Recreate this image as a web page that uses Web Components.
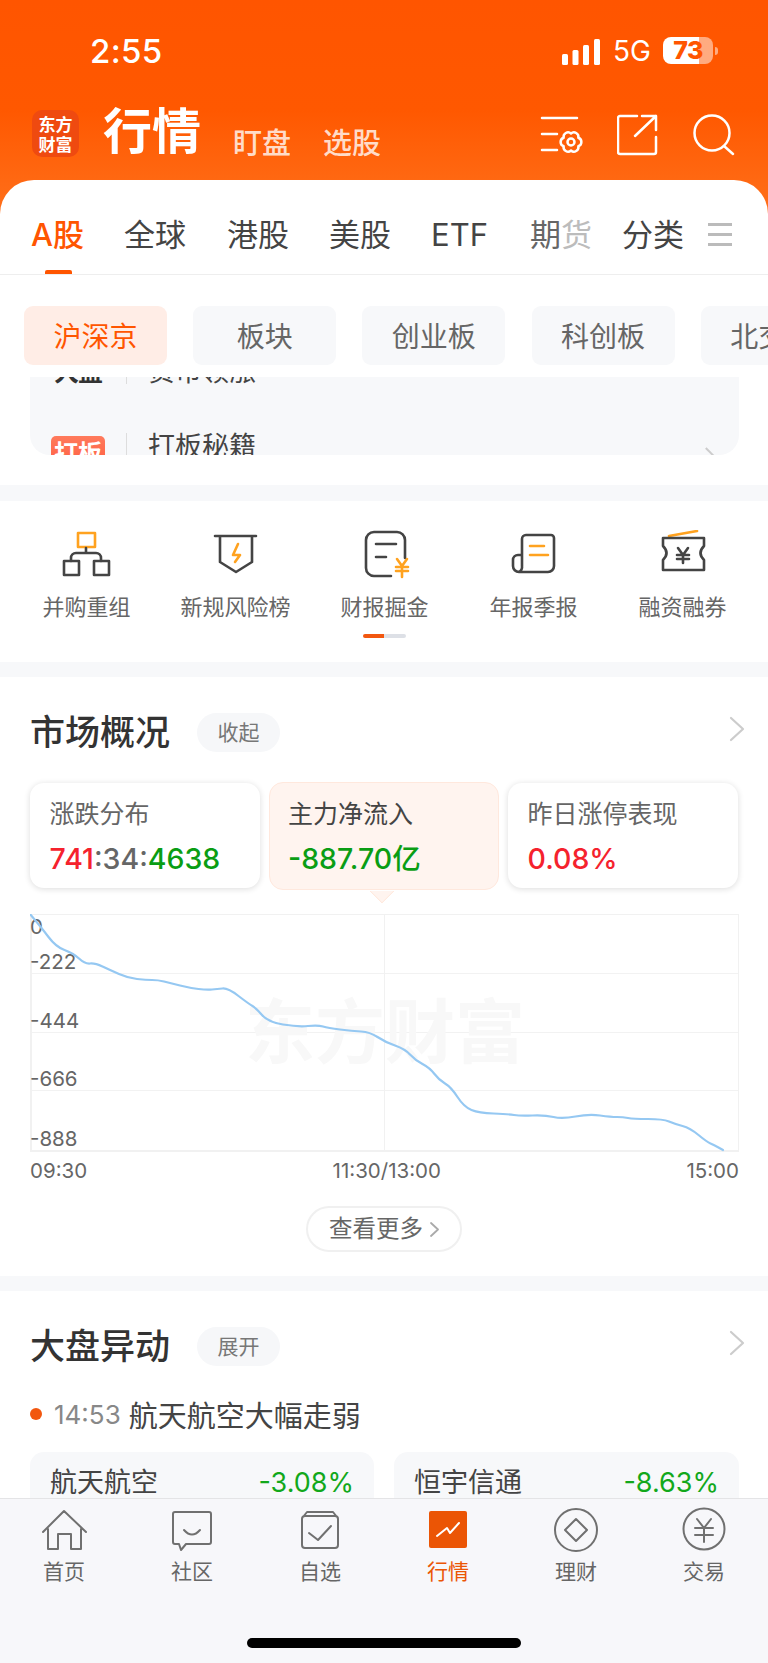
<!DOCTYPE html>
<html lang="zh">
<head>
<meta charset="utf-8">
<title>行情</title>
<style>
  html, body { margin: 0; padding: 0; background: #fff; }
  body {
    width: 768px; height: 1663px; overflow: hidden;
    display: flex; flex-direction: column;
    font-family: Inter, "Noto Sans CJK SC", sans-serif;
    color: #333;
  }
</style>
</head>
<body>

<top-header></top-header>

<page-body>
  <promo-panel></promo-panel>
  <tool-grid></tool-grid>
  <market-overview></market-overview>
  <market-alerts></market-alerts>
</page-body>

<tab-bar></tab-bar>

<script>
class TopHeader extends HTMLElement {

    constructor() {
        super()
        this.shadow = this.attachShadow({ mode: 'open' })
    }

    connectedCallback() {
        this.render()
    }

    render() {
        this.shadow.innerHTML =
      /*html*/`
      <style>
        :host{
            display:block;
            flex:none;
            background:linear-gradient(180deg,#ff5500 0,#ff5800 110px,#ff711c 220px);
        }
        .status{
            height:108px;
            padding:37px 50px 0 90px;
            box-sizing:border-box;
            display:flex;
            align-items:flex-start;
            color:#fff;
        }
        .time{
            font-size:33px;
            line-height:29px;
            font-weight:500;
            flex:1;
            letter-spacing:.3px;
        }
        .net{
            font-size:28px;
            line-height:28px;
            margin:0 12px 0 13px;
        }
        .battery{
            width:50px;
            height:27px;
            border-radius:8px;
            background:linear-gradient(90deg,#fff 36px,rgba(255,255,255,.5) 36px);
            color:#ff5500;
            font-size:25px;
            font-weight:800;
            line-height:27px;
            text-align:center;
            letter-spacing:-.5px;
        }
        .nub{
            width:3px;
            height:8px;
            margin:10px 0 0 2px;
            border-radius:0 3px 3px 0;
            background:rgba(255,255,255,.5);
        }
        .bar{
            height:72px;
            padding:0 32px;
            display:flex;
            align-items:flex-start;
            color:#fff;
        }
        .logo{
            width:47px;
            height:47px;
            margin-top:2px;
            border-radius:10px;
            background:#ef4a10;
            font-family:"Noto Sans CJK SC",sans-serif;
            font-size:17px;
            font-weight:700;
            line-height:20px;
            text-align:center;
            display:flex;
            flex-direction:column;
            justify-content:center;
        }
        .title{
            font-size:49px;
            line-height:48px;
            font-weight:700;
            margin:0 0 0 24px;
            width:130px;
        }
        .sub{
            font-size:29px;
            line-height:30px;
            margin-top:21px;
            font-weight:500;
            color:rgba(255,255,255,.8);
        }
        .sub + .sub{
            margin-left:32px;
        }
        .icons{
            margin-left:auto;
            margin-top:5px;
            display:flex;
        }
        svg{
            display:block;
        }
      </style>
      <div class="status">
        <div class="time">2:55</div>
        <svg width="38" height="26" viewBox="0 0 38 26" style="margin-top:2px" fill="#fff">
          <rect x="0" y="15" width="6" height="11" rx="1.5"/>
          <rect x="10.5" y="11" width="6" height="15" rx="1.5"/>
          <rect x="21" y="6" width="6" height="20" rx="1.5"/>
          <rect x="32" y="0" width="6" height="26" rx="1.5"/>
        </svg>
        <div class="net">5G</div>
        <div class="battery">73</div>
        <div class="nub"></div>
      </div>
      <div class="bar">
        <div class="logo"><span>东方</span><span>财富</span></div>
        <div class="title">行情</div>
        <div class="sub">盯盘</div>
        <div class="sub">选股</div>
        <div class="icons">
          <svg width="46" height="44" viewBox="0 0 46 44" fill="none" stroke="#fff" stroke-width="2.5" stroke-linecap="round" stroke-linejoin="round" style="margin-right:31px">
            <path d="M2 5H37M2 21H17M2 37H17"/>
            <path d="M31 20.5a4.5 4.5 0 0 1 7.36 4.25a4.5 4.5 0 0 1 0 8.5a4.5 4.5 0 0 1-7.36 4.25a4.5 4.5 0 0 1-7.36-4.25a4.5 4.5 0 0 1 0-8.5a4.5 4.5 0 0 1 7.36-4.25Z"/>
            <circle cx="31" cy="29" r="3.5"/>
          </svg>
          <svg width="41" height="44" viewBox="0 0 41 44" fill="none" stroke="#fff" stroke-width="2.5" stroke-linecap="round" stroke-linejoin="round" style="margin-right:34px">
            <path d="M20 3H3a2 2 0 0 0-2 2V39a2 2 0 0 0 2 2H37a2 2 0 0 0 2-2V24"/>
            <path d="M18 23L39 3M25 3H39V17"/>
          </svg>
          <svg width="44" height="44" viewBox="0 0 44 44" fill="none" stroke="#fff" stroke-width="2.5" stroke-linecap="round">
            <circle cx="20" cy="20" r="17.5"/>
            <path d="M32 33L41 41"/>
          </svg>
        </div>
      </div>
      <market-tabs></market-tabs>
      `
    }
}

class MarketTabs extends HTMLElement {

    constructor() {
        super()
        this.shadow = this.attachShadow({ mode: 'open' })
    }

    connectedCallback() {
        this.render()
    }

    render() {
        this.shadow.innerHTML =
      /*html*/`
      <style>
        :host{
            display:block;
            background:#fff;
            border-radius:34px 34px 0 0;
        }
        .tabs{
            height:94px;
            padding:0 35px 0 31px;
            display:flex;
            border-bottom:1px solid #eee;
            font-size:31px;
            color:#444;
        }
        .tab{
            padding-top:33px;
            line-height:44px;
            white-space:nowrap;
        }
        .on{
            color:#ff5500;
            font-weight:500;
            position:relative;
        }
        .on::after{
            content:"";
            position:absolute;
            left:14px;
            bottom:0;
            width:27px;
            height:4px;
            background:#ff5500;
            border-radius:2px 2px 0 0;
        }
        .fade{
            color:#666;
        }
        .fade span{
            color:#bcbcbc;
        }
        .menu{
            margin:43px 0 0 24px;
            width:24px;
            height:23px;
            border-top:3px solid #bbb;
            border-bottom:3px solid #bbb;
            box-sizing:border-box;
            position:relative;
        }
        .menu::after{
            content:"";
            position:absolute;
            left:0;
            right:0;
            top:7px;
            height:3px;
            background:#bbb;
        }
        .chips{
            padding:31px 0 12px 24px;
            display:flex;
            gap:26.2px;
            overflow:hidden;
        }
        .chip{
            flex:none;
            width:143px;
            height:59px;
            border-radius:9px;
            background:#f7f8fa;
            color:#666;
            font-size:28px;
            line-height:62px;
            text-align:center;
        }
        .chip.active{
            background:#ffede6;
            color:#ff5500;
        }
      </style>
      <div class="tabs">
        <div class="tab on" style="width:93px">A股</div>
        <div class="tab" style="width:103px">全球</div>
        <div class="tab" style="width:102px">港股</div>
        <div class="tab" style="width:102px">美股</div>
        <div class="tab" style="width:99px">ETF</div>
        <div class="tab fade" style="width:92px">期<span>货</span></div>
        <div class="tab">分类</div>
        <div class="menu"></div>
      </div>
      <div class="chips">
        <div class="chip active">沪深京</div>
        <div class="chip">板块</div>
        <div class="chip">创业板</div>
        <div class="chip">科创板</div>
        <div class="chip">北交所</div>
      </div>
      `
    }
}

class PageBody extends HTMLElement {

    constructor() {
        super()
        this.shadow = this.attachShadow({ mode: 'open' })
    }

    connectedCallback() {
        this.shadow.innerHTML =
      /*html*/`
      <style>
        :host{
            display:block;
            flex:1;
            min-height:0;
            overflow:hidden;
            background:#f7f8fa;
        }
      </style>
      <slot></slot>
      `
    }
}

class PromoPanel extends HTMLElement {

    constructor() {
        super()
        this.shadow = this.attachShadow({ mode: 'open' })
    }

    connectedCallback() {
        this.render()
    }

    render() {
        // la lista esta cortada arriba y abajo, como en el scroll real
        this.shadow.innerHTML =
      /*html*/`
      <style>
        :host{
            display:block;
            background:#fff;
            padding:0 29px 30px 30px;
        }
        .panel{
            height:78px;
            overflow:hidden;
            background:#f7f8fa;
            border-radius:0 0 20px 20px;
            position:relative;
        }
        .rows{
            margin-top:-25px;
        }
        .row{
            display:flex;
            align-items:center;
            height:40px;
            padding-left:21px;
            font-size:27px;
            line-height:40px;
            color:#444;
        }
        .icon{
            width:54px;
            font-size:25px;
            font-weight:700;
            color:#333;
            text-align:center;
            letter-spacing:-1px;
        }
        .badge{
            width:54px;
            height:36px;
            border-radius:5px 5px 0 0;
            background:linear-gradient(180deg,#ff7a5c,#ff5a3c);
            color:#fff;
            font-size:24px;
            line-height:36px;
            font-weight:700;
            text-align:center;
            margin-top:11px;
        }
        .line{
            width:1px;
            height:24px;
            background:#ddd;
            margin:0 21px;
        }
        .row.second{
            margin-top:33px;
            align-items:flex-start;
        }
        .row.second .line{
            margin-top:8px;
            height:34px;
        }
        .row.second span{
            margin-top:2px;
        }
        .more{
            position:absolute;
            right:26px;
            bottom:-8px;
            width:11px;
            height:11px;
            border-top:2px solid #ccc;
            border-right:2px solid #ccc;
            transform:rotate(45deg);
        }
      </style>
      <div class="panel">
        <div class="rows">
          <div class="row"><div class="icon">大盘</div><div class="line"></div><span>贵币领涨</span></div>
          <div class="row second"><div class="badge">打板</div><div class="line"></div><span>打板秘籍</span></div>
        </div>
        <div class="more"></div>
      </div>
      `
    }
}

const DARK = 'fill="none" stroke="#444" stroke-width="2.6" stroke-linecap="round" stroke-linejoin="round"'
const GOLD = 'fill="none" stroke="#ffa21f" stroke-width="2.6" stroke-linecap="round" stroke-linejoin="round"'

class ToolGrid extends HTMLElement {

    constructor() {
        super()
        this.shadow = this.attachShadow({ mode: 'open' })
    }

    connectedCallback() {
        this.render()
    }

    render() {
        this.shadow.innerHTML =
      /*html*/`
      <style>
        :host{
            display:block;
            background:#fff;
            margin:16px 0 15px;
            height:161px;
        }
        .grid{
            padding:29px 12px 0;
            display:grid;
            grid-template-columns:repeat(5,149px);
        }
        .item{
            display:flex;
            flex-direction:column;
            align-items:center;
            font-size:22px;
            line-height:30px;
            color:#666;
            white-space:nowrap;
        }
        svg{
            display:block;
            margin-bottom:12px;
        }
        .dots{
            width:43px;
            height:4px;
            margin:12px auto 0;
            border-radius:2px;
            background:linear-gradient(90deg,#f2570f 21px,#dde0e6 21px);
        }
      </style>
      <div class="grid">
        <div class="item">
          <svg width="64" height="50" viewBox="0 0 64 50">
            <rect x="23" y="3" width="17" height="14" ${GOLD}/>
            <path d="M31 18V23M16 31V28a5 5 0 0 1 5-5H41a5 5 0 0 1 5 5V31" ${DARK}/>
            <rect x="9" y="31" width="15" height="14" ${DARK}/>
            <rect x="39" y="31" width="15" height="14" ${DARK}/>
          </svg>
          并购重组
        </div>
        <div class="item">
          <svg width="64" height="50" viewBox="0 0 64 50">
            <path d="M11 6H52M16 6V32L32 42L48 32V6" ${DARK}/>
            <path d="M34 14L29 25H36L31 32" ${GOLD}/>
          </svg>
          新规风险榜
        </div>
        <div class="item">
          <svg width="64" height="50" viewBox="0 0 64 50">
            <path d="M52 28V10a8 8 0 0 0-8-8H21a8 8 0 0 0-8 8V38a8 8 0 0 0 8 8H38" ${DARK}/>
            <path d="M23 14H43M23 27H33" ${DARK}/>
            <path d="M44 29L49 36L54 29M43 37H55M43 41H55M49 36V47" ${GOLD}/>
          </svg>
          财报掘金
        </div>
        <div class="item">
          <svg width="64" height="50" viewBox="0 0 64 50">
            <path d="M20 36V9a4 4 0 0 1 4-4H49a3 3 0 0 1 3 3V36a6 6 0 0 1-6 6H17a6 6 0 0 1-6-6V30a5 5 0 0 1 5-5h4M20 36a6 6 0 0 1-3 6" ${DARK}/>
            <path d="M28 16H42M28 25H46" ${GOLD}/>
          </svg>
          年报季报
        </div>
        <div class="item">
          <svg width="64" height="50" viewBox="0 0 64 50">
            <path d="M18 6L46 1" ${GOLD}/>
            <path d="M12 8H53V16Q46 23 53 30V40H12V30Q19 23 12 16Z" ${DARK}/>
            <path d="M27 18L32 25L37 18M26 25H38M26 29H38M32 25V33" ${DARK} />
          </svg>
          融资融券
        </div>
      </div>
      <div class="dots"></div>
      `
    }
}

class SectionHead extends HTMLElement {

    constructor() {
        super()
        this.shadow = this.attachShadow({ mode: 'open' })
    }

    connectedCallback() {
        this.shadow.innerHTML =
      /*html*/`
      <style>
        :host{
            display:flex;
            align-items:center;
            height:40px;
        }
        .title{
            font-size:35px;
            line-height:40px;
            font-weight:500;
            color:#333;
            width:167px;
            white-space:nowrap;
        }
        .pill{
            width:83px;
            height:39px;
            border-radius:20px;
            background:#f6f7f9;
            color:#777;
            font-size:21px;
            line-height:39px;
            text-align:center;
        }
        svg{
            margin:0 0 6px auto;
        }
      </style>
      <div class="title"><slot name="title"></slot></div>
      <div class="pill"><slot name="action"></slot></div>
      <svg width="16" height="26" viewBox="0 0 16 26" fill="none" stroke="#ccc" stroke-width="2.2" stroke-linecap="round" stroke-linejoin="round">
        <path d="M2 2L14 13L2 24"/>
      </svg>
      `
    }
}

class StatCard extends HTMLElement {

    constructor() {
        super()
        this.shadow = this.attachShadow({ mode: 'open' })
    }

    connectedCallback() {
        this.shadow.innerHTML =
      /*html*/`
      <style>
        :host{
            display:block;
            box-sizing:border-box;
            width:230px;
            height:105px;
            padding:17px 0 0 19.5px;
            background:#fff;
            border-radius:14px;
            box-shadow:0 1px 6px rgba(0,0,0,.14);
            position:relative;
            font-size:25px;
            line-height:28px;
            color:#666;
        }
        :host([active]){
            height:108px;
            margin-top:-1px;
            padding-left:18px;
            background:#fff4ef;
            border:1px solid #ffe8dd;
            box-shadow:none;
            color:#444;
        }
        :host([active])::after{
            content:"";
            position:absolute;
            left:103px;
            bottom:-11px;
            width:17px;
            height:17px;
            background:#fff4ef;
            border-right:1px solid #ffe8dd;
            border-bottom:1px solid #ffe8dd;
            transform:rotate(45deg);
            clip-path:polygon(100% 0,100% 100%,0 100%);
        }
        .value{
            margin-top:15px;
            font-size:28.5px;
            line-height:32px;
            font-weight:500;
            white-space:nowrap;
        }
      </style>
      <slot name="label"></slot>
      <div class="value"><slot name="value"></slot></div>
      `
    }
}

class FlowChart extends HTMLElement {

    constructor() {
        super()
        this.shadow = this.attachShadow({ mode: 'open' })
    }

    connectedCallback() {
        this.render()
    }

    smooth(points) {
        // curva por puntos medios para que no se vea quebrada
        let d = 'M' + points[0].join(' ')
        for (let i = 1; i < points.length - 1; i++) {
            const mx = (points[i][0] + points[i + 1][0]) / 2
            const my = (points[i][1] + points[i + 1][1]) / 2
            d += ' Q' + points[i].join(' ') + ' ' + mx + ' ' + my
        }
        return d + ' L' + points[points.length - 1].join(' ')
    }

    render() {
        // puntos tomados a ojo de la curva, en px de la grafica
        const points = [[0,0],[11,13],[26,33],[43,39],[55,50],[65,49],[80,56],[98,64],[116,66],[128,66],[140,69],[160,74],[177,76],[187,75],[198,74],[219,90],[226,94],[238,108],[268,113],[288,111],[298,114],[322,117],[340,118],[355,128],[375,135],[385,146],[400,154],[409,166],[421,173],[434,193],[449,199],[478,200],[490,202],[515,201],[532,205],[559,200],[581,203],[593,203],[603,205],[633,205],[645,210],[660,214],[677,228],[684,231],[693,236]]

        this.shadow.innerHTML =
      /*html*/`
      <style>
        :host{
            display:block;
            margin-right:6px;
        }
        .plot{
            position:relative;
            height:235px;
            border:solid #f1f1f1;
            border-width:1px 1px 2px 2px;
            display:grid;
            grid-template-rows:repeat(4,1fr);
        }
        .cell{
            border-bottom:1px solid #f2f2f2;
            font-size:20.5px;
            line-height:24px;
            color:#666;
            display:flex;
            align-items:flex-end;
        }
        .cell:last-of-type{
            border-bottom:0;
        }
        .label{
            margin:0 0 -1px -2px;
        }
        .zero{
            position:absolute;
            left:-2px;
            top:0;
            font-size:20.5px;
            line-height:24px;
            color:#666;
        }
        .mid{
            position:absolute;
            left:352px;
            top:0;
            bottom:0;
            width:1px;
            background:#f1f1f1;
        }
        .mark{
            position:absolute;
            left:213px;
            top:73px;
            font-family:"Noto Sans CJK SC",sans-serif;
            font-size:70px;
            line-height:80px;
            font-weight:700;
            color:#f8f8f8;
            white-space:nowrap;
        }
        svg{
            position:absolute;
            left:-2px;
            top:-1px;
        }
        .times{
            display:flex;
            justify-content:space-between;
            font-size:20.5px;
            line-height:24px;
            color:#666;
            margin-top:7px;
        }
      </style>
      <div class="plot">
        <div class="mark">东方财富</div>
        <div class="mid"></div>
        <div class="zero">0</div>
        <div class="cell"><span class="label">-222</span></div>
        <div class="cell"><span class="label">-444</span></div>
        <div class="cell"><span class="label">-666</span></div>
        <div class="cell"><span class="label">-888</span></div>
        <svg width="708" height="238" viewBox="0 0 708 238" fill="none">
          <path d="${this.smooth(points)}" stroke="#95c8f2" stroke-width="2.2" stroke-linejoin="round" stroke-linecap="round"/>
        </svg>
      </div>
      <div class="times"><span>09:30</span><span>11:30/13:00</span><span>15:00</span></div>
      `
    }
}

class MarketOverview extends HTMLElement {

    constructor() {
        super()
        this.shadow = this.attachShadow({ mode: 'open' })
    }

    connectedCallback() {
        this.render()
    }

    render() {
        this.shadow.innerHTML =
      /*html*/`
      <style>
        :host{
            display:block;
            background:#fff;
            margin-bottom:15px;
            height:599px;
            padding:35px 23px 0 30px;
            box-sizing:border-box;
        }
        .cards{
            display:flex;
            gap:9px;
            margin:31px 0 26px;
            height:105px;
        }
        .r{ color:#f5222d; }
        .g{ color:#0a9d14; }
        .n{ color:#666; }
        .more{
            width:156px;
            height:46px;
            margin:23px 0 0 276px;
            box-sizing:border-box;
            border:2px solid #f0f0f0;
            border-radius:23px;
            font-size:23.5px;
            line-height:42px;
            color:#666;
            display:flex;
            justify-content:center;
            align-items:center;
            gap:7px;
        }
      </style>
      <section-head>
        <span slot="title">市场概况</span>
        <span slot="action">收起</span>
      </section-head>
      <div class="cards">
        <stat-card>
          <span slot="label">涨跌分布</span>
          <span slot="value"><span class="r">741</span><span class="n">:34:</span><span class="g">4638</span></span>
        </stat-card>
        <stat-card active>
          <span slot="label">主力净流入</span>
          <span slot="value" class="g">-887.70亿</span>
        </stat-card>
        <stat-card>
          <span slot="label">昨日涨停表现</span>
          <span slot="value" class="r">0.08%</span>
        </stat-card>
      </div>
      <flow-chart></flow-chart>
      <div class="more">
        查看更多
        <svg width="9" height="15" viewBox="0 0 9 15" fill="none" stroke="#aaa" stroke-width="1.8" stroke-linecap="round" stroke-linejoin="round"><path d="M1 1L8 7.5L1 14"/></svg>
      </div>
      `
    }
}

class MarketAlerts extends HTMLElement {

    constructor() {
        super()
        this.shadow = this.attachShadow({ mode: 'open' })
    }

    connectedCallback() {
        this.render()
    }

    render() {
        this.shadow.innerHTML =
      /*html*/`
      <style>
        :host{
            display:block;
            background:#fff;
            padding:35px 23px 0 30px;
            height:208px;
            box-sizing:border-box;
            overflow:hidden;
        }
        .event{
            margin-top:28px;
            height:40px;
            display:flex;
            align-items:center;
            font-size:29px;
            color:#444;
        }
        .dot{
            width:12px;
            height:12px;
            border-radius:50%;
            background:#f2570f;
            margin-right:12px;
        }
        .time{
            font-size:26px;
            color:#888;
            margin-right:8px;
        }
        .stocks{
            display:grid;
            grid-template-columns:344px 345px;
            gap:20px;
            margin-top:18px;
        }
        .stock{
            height:80px;
            padding:13px 20px 0;
            box-sizing:border-box;
            border-radius:14px;
            background:#f7f8fa;
            display:flex;
            justify-content:space-between;
            font-size:27px;
            line-height:36px;
            color:#444;
        }
        .stock b{
            font-weight:400;
            color:#12a81b;
        }
      </style>
      <section-head>
        <span slot="title">大盘异动</span>
        <span slot="action">展开</span>
      </section-head>
      <div class="event"><span class="dot"></span><span class="time">14:53</span>航天航空大幅走弱</div>
      <div class="stocks">
        <div class="stock">航天航空<b>-3.08%</b></div>
        <div class="stock">恒宇信通<b>-8.63%</b></div>
      </div>
      `
    }
}

const GREY = 'fill="none" stroke="#707070" stroke-width="2" stroke-linecap="round" stroke-linejoin="round"'

class TabBar extends HTMLElement {

    constructor() {
        super()
        this.shadow = this.attachShadow({ mode: 'open' })
    }

    connectedCallback() {
        this.render()
    }

    render() {
        this.shadow.innerHTML =
      /*html*/`
      <style>
        :host{
            display:block;
            flex:none;
            height:165px;
            box-sizing:border-box;
            background:#f7f7fa;
            border-top:1px solid #e4e4e6;
        }
        .items{
            display:grid;
            grid-template-columns:repeat(6,128px);
            padding-top:7px;
        }
        .item{
            display:flex;
            flex-direction:column;
            align-items:center;
            font-size:21px;
            line-height:28px;
            color:#666;
        }
        .item.active{
            color:#eb5505;
        }
        svg{
            display:block;
            margin-bottom:4px;
        }
        .home{
            width:274px;
            height:10px;
            border-radius:5px;
            background:#000;
            margin:52px auto 0;
        }
      </style>
      <div class="items">
        <div class="item">
          <svg width="48" height="48" viewBox="0 0 48 48">
            <path d="M3 26L24 5L46 26M8 23V43H18V28H31V43H41V23" ${GREY}/>
          </svg>
          首页
        </div>
        <div class="item">
          <svg width="48" height="48" viewBox="0 0 48 48">
            <path d="M7 6H41a2 2 0 0 1 2 2V36a2 2 0 0 1-2 2H18L13 44L11 38H7a2 2 0 0 1-2-2V8a2 2 0 0 1 2-2Z" ${GREY}/>
            <path d="M16 24Q24 33 32 24" ${GREY}/>
          </svg>
          社区
        </div>
        <div class="item">
          <svg width="48" height="48" viewBox="0 0 48 48">
            <path d="M6 13a3 3 0 0 1 3-3H39a3 3 0 0 1 3 3V39a3 3 0 0 1-3 3H9a3 3 0 0 1-3-3ZM7 11L11 6H37L41 11" ${GREY}/>
            <path d="M13 27L22 34L35 20" ${GREY}/>
          </svg>
          自选
        </div>
        <div class="item active">
          <svg width="48" height="48" viewBox="0 0 48 48">
            <rect x="5" y="5" width="38" height="37" rx="2" fill="#eb5505"/>
            <path d="M13 30L23 22L26 27L35 17" fill="none" stroke="#fff" stroke-width="2" stroke-linecap="round" stroke-linejoin="round"/>
          </svg>
          行情
        </div>
        <div class="item">
          <svg width="48" height="48" viewBox="0 0 48 48">
            <circle cx="24" cy="24" r="21" ${GREY}/>
            <path d="M24 13L35 24L24 35L13 24Z" ${GREY}/>
          </svg>
          理财
        </div>
        <div class="item">
          <svg width="48" height="48" viewBox="0 0 48 48">
            <circle cx="24" cy="23" r="20.5" ${GREY}/>
            <path d="M17 13L24 22L31 13M15 22H33M15 29H33M24 22V36" ${GREY}/>
          </svg>
          交易
        </div>
      </div>
      <div class="home"></div>
      `
    }
}

customElements.define('market-tabs', MarketTabs);
customElements.define('top-header', TopHeader);
customElements.define('page-body', PageBody);
customElements.define('promo-panel', PromoPanel);
customElements.define('tool-grid', ToolGrid);
customElements.define('section-head', SectionHead);
customElements.define('stat-card', StatCard);
customElements.define('flow-chart', FlowChart);
customElements.define('market-overview', MarketOverview);
customElements.define('market-alerts', MarketAlerts);
customElements.define('tab-bar', TabBar);
</script>
</body>
</html>
